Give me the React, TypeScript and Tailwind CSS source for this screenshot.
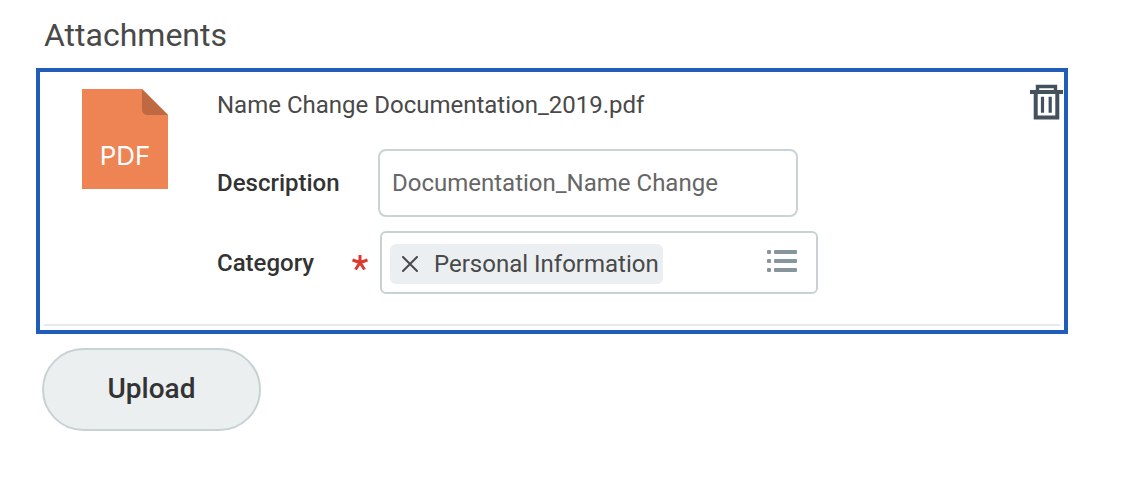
function PdfIcon() {
  return (
    <svg className="h-[100px] w-[86px] shrink-0" viewBox="0 0 86 100" role="img" aria-label="PDF">
      <path d="M0 0h60l26 26v74H0z" fill="#ee8354" />
      <path d="M60 0l26 26H65a5 5 0 0 1-5-5z" fill="#bf6943" />
      <text x="43" y="76" textAnchor="middle" fontSize="26" fontWeight="400" fill="#ffffff" fontFamily="Inter, sans-serif">
        PDF
      </text>
    </svg>
  );
}

function TrashIcon() {
  return (
    <svg className="h-9 w-[33px]" viewBox="0 0 33 36" fill="none" stroke="#43515f" strokeWidth="4" aria-hidden="true">
      <path d="M0 8h33" />
      <path d="M7.5 8V2.5h18V8" strokeWidth="3.4" />
      <path d="M5.7 8v25.4h21.6V8" />
      <path d="M12.5 12.7v16M20.2 12.7v16" strokeWidth="3.2" />
    </svg>
  );
}

function ListIcon() {
  return (
    <svg className="h-6 w-[30px]" viewBox="0 0 30 24" fill="#87959f" aria-hidden="true">
      <rect x="0" y="1" width="4" height="4" rx="1" />
      <rect x="0" y="10" width="4" height="4" rx="1" />
      <rect x="0" y="19" width="4" height="4" rx="1" />
      <rect x="7" y="1" width="23" height="4" rx="1" />
      <rect x="7" y="10" width="23" height="4" rx="1" />
      <rect x="7" y="19" width="23" height="4" rx="1" />
    </svg>
  );
}

export default function App() {
  return (
    <main className="min-h-screen bg-white pt-[15px] pr-[62px] pb-12 pl-9 font-['Roboto',sans-serif] text-2xl text-[#494949]">
      <h1 className="pl-2 text-[32px] leading-10">Attachments</h1>

      <section className="mt-[13px] border-4 border-[#205cb8] px-1 pb-1">
        <div className="flex items-start border-b-2 border-[#e8e9e9] pt-[17px] pb-[30px] pl-[38px]">
          <PdfIcon />

          <div className="ml-[49px] min-w-0">
            <p className="leading-8">Name Change Documentation_2019.pdf</p>

            <div className="mt-7 flex items-center">
              <label htmlFor="description" className="w-[161px] font-medium text-[#333333]">
                Description
              </label>
              <input
                id="description"
                type="text"
                defaultValue="Documentation_Name Change"
                className="h-[68px] w-[420px] rounded-lg border-2 border-[#ccd3d8] bg-white px-3 text-[#666666] outline-none"
              />
            </div>

            {/* Category picker */}
            <div className="mt-[14px] flex items-center">
              <div id="category-label" className="flex w-[163px] items-center justify-between pr-3 font-medium text-[#333333]">
                <span>Category</span>
                <svg className="h-4 w-4" viewBox="0 0 16 16" stroke="#de382f" strokeWidth="3" role="img" aria-label="required">
                  <path d="M8 7.5V0M8 7.5L0.5 5M8 7.5l7.5-2.5M8 7.5l-4.5 7M8 7.5l4.5 7" />
                </svg>
              </div>
              <div
                role="group"
                aria-labelledby="category-label"
                className="flex h-[63px] w-[438px] items-center justify-between rounded-md border-2 border-[#c8d2d5] pt-[2px] pr-[19px] pl-2"
              >
                <span className="flex h-10 items-center rounded-md bg-[#ebeff2] pr-1 pl-3">
                  <button type="button" aria-label="Remove Personal Information">
                    <svg className="h-4 w-4" viewBox="0 0 16 16" stroke="#494949" strokeWidth="2" strokeLinecap="round" aria-hidden="true">
                      <path d="M1 1l14 14M15 1L1 15" />
                    </svg>
                  </button>
                  <span className="ml-4">Personal Information</span>
                </span>
                <button type="button" aria-label="Show categories" className="pb-[6px]">
                  <ListIcon />
                </button>
              </div>
            </div>
          </div>

          <button type="button" aria-label="Delete attachment" className="-mt-[5px] -mr-[3px] ml-auto shrink-0">
            <TrashIcon />
          </button>
        </div>
      </section>

      <button
        type="button"
        className="mt-[14px] ml-[6px] h-[83px] w-[219px] rounded-full border-2 border-[#c8d2d5] bg-[#ebeff0] pb-[2px] text-[28px] font-medium text-[#333333]"
      >
        Upload
      </button>
    </main>
  );
}
